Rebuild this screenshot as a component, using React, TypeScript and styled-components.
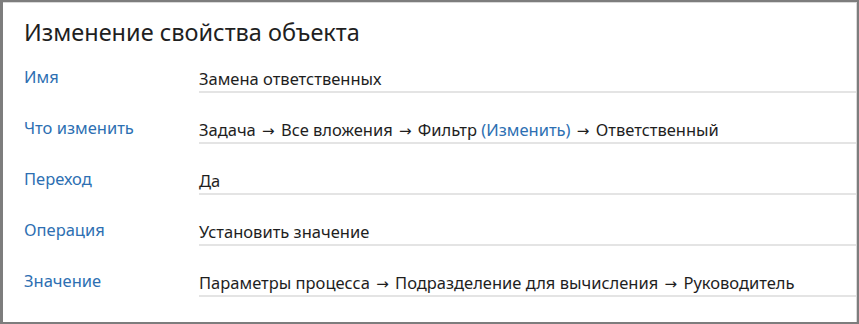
import React from "react";
import styled, { createGlobalStyle } from "styled-components";

const GlobalStyle = createGlobalStyle`
  html, body {
    margin: 0;
    padding: 0;
    background: #ffffff;
  }
  body {
    font-family: "Noto Sans", "Open Sans", sans-serif;
  }
`;

const S = {
  Frame: styled.div`
    width: 859px;
    height: 324px;
    box-sizing: border-box;
    border: 2px solid #7d7d7d;
    border-left-width: 3px;
    background: #ffffff;
  `,
  Panel: styled.div`
    height: 100%;
    box-sizing: border-box;
    border-top: 1px solid #d9d9d9;
    border-right: 1px solid #d9d9d9;
    padding: 14px 0 0 21px;
    display: flex;
    flex-direction: column;
  `,
  Title: styled.h1`
    margin: 0;
    font-family: "Noto Sans", "Open Sans", sans-serif;
    font-weight: 400;
    font-size: 23.5px;
    line-height: 30px;
    color: #1f1f1f;
  `,
  Form: styled.div`
    margin-top: 20px;
    display: flex;
    flex-direction: column;
  `,
  Field: styled.div`
    display: grid;
    grid-template-columns: 175px 1fr;
    height: 51px;
  `,
  Label: styled.div`
    font-size: 16.5px;
    line-height: 20px;
    color: #2d6fb2;
  `,
  Value: styled.div`
    font-size: 16.5px;
    line-height: 22px;
    color: #1e1e1e;
    padding-top: 1px;
    height: 23px;
    white-space: nowrap;
    border-bottom: 2px solid #e4e4e4;
  `,
  Arrow: styled.span`
    font-family: "DejaVu Sans", sans-serif;
    font-size: 15px;
    margin: 0 2px;
  `,
  LinkText: styled.span`
    color: #2d6fb2;
  `,
};

type Row = {
  label: string;
  value: React.ReactNode;
};

const Arrow = () => <S.Arrow>→</S.Arrow>;

const rows: Row[] = [
  { label: "Имя", value: "Замена ответственных" },
  {
    label: "Что изменить",
    value: (
      <>
        Задача <Arrow /> Все вложения <Arrow /> Фильтр{" "}
        <S.LinkText>(Изменить)</S.LinkText> <Arrow /> Ответственный
      </>
    ),
  },
  { label: "Переход", value: "Да" },
  { label: "Операция", value: "Установить значение" },
  {
    label: "Значение",
    value: (
      <>
        Параметры процесса <Arrow /> Подразделение для вычисления <Arrow />{" "}
        Руководитель
      </>
    ),
  },
];

const App = () => {
  return (
    <>
      <GlobalStyle />
      <S.Frame>
        <S.Panel>
          <S.Title>Изменение свойства объекта</S.Title>
          <S.Form>
            {rows.map((row) => (
              <S.Field key={row.label}>
                <S.Label>{row.label}</S.Label>
                <S.Value>{row.value}</S.Value>
              </S.Field>
            ))}
          </S.Form>
        </S.Panel>
      </S.Frame>
    </>
  );
};

export default App;
